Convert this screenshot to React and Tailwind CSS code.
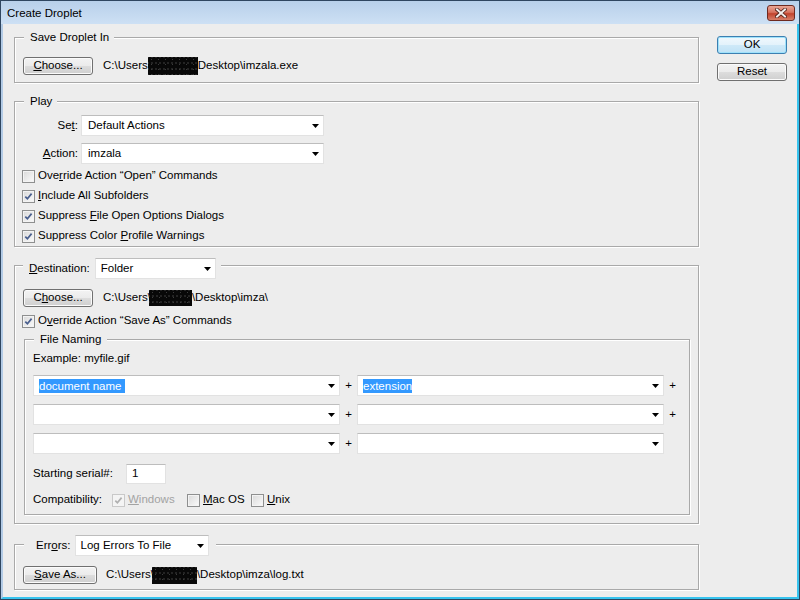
import React from 'react';
import clsx from 'clsx';

function Check({ checked, disabled }) {
    return (
        <span
            className={clsx(
                'w-[13px] h-[13px] border flex items-center justify-center shrink-0',
                disabled
                    ? 'border-[#c9c9c9] bg-[#f4f4f4]'
                    : 'border-[#8e8f8f] bg-linear-to-br from-[#d9d9d9] to-[#fbfbfb] shadow-[inset_0_0_0_1px_#f3f3f3]'
            )}
        >
            {checked && (
                <svg width="9" height="9" viewBox="0 0 9 9">
                    <path
                        d="M1.3 4.6 L3.4 6.8 L7.6 1.6"
                        fill="none"
                        stroke={disabled ? '#b0b0b0' : '#4a5f8e'}
                        strokeWidth="1.7"
                    />
                </svg>
            )}
        </span>
    );
}

function CheckRow({ checked, children }) {
    return (
        <div className="h-[20px] flex items-center gap-[3px] -ml-[1px]">
            <Check checked={checked} />
            <span>{children}</span>
        </div>
    );
}

function Arrow() {
    return (
        <svg width="7" height="4" viewBox="0 0 7 4" className="shrink-0">
            <path d="M0 0h7L3.5 4z" fill="#000" />
        </svg>
    );
}

function Select({ className, children }) {
    return (
        <div
            className={clsx(
                'h-[21px] bg-white border border-[#e2e2e2] border-t-[#bdbdbd] flex items-center justify-between pr-[4px] shrink-0',
                className
            )}
        >
            <span className="flex items-center">{children}</span>
            <Arrow />
        </div>
    );
}

function Button({ className, children }) {
    return (
        <div
            className={clsx(
                'h-[18px] border border-[#707070] rounded-[3px] flex items-center justify-center shrink-0 bg-[linear-gradient(#f3f3f3,#ebebeb_50%,#dddddd_50%,#cfcfcf)] shadow-[inset_0_0_0_1px_#fbfbfb]',
                className
            )}
        >
            {children}
        </div>
    );
}

// blacked-out user name in the paths
function Redacted({ className }) {
    return (
        <span
            className={clsx(
                'inline-block bg-[#080808] bg-[radial-gradient(#3c3c3c_0.6px,transparent_1px),radial-gradient(#2a2a2a_0.5px,transparent_1px)] bg-[length:7px_5px,4px_6px] bg-[position:0_0,2px_3px]',
                className
            )}
        />
    );
}

const groupBox = 'border border-[#a9a9a9] shadow-[inset_1px_1px_0_#fff,1px_1px_0_#fff]';

export default function App() {
    return (
        <div className="w-[800px] h-[600px] border border-[#2f4660] flex flex-col overflow-hidden bg-[#ededed] text-black text-[11.5px] leading-none font-['Liberation_Sans',Arial,sans-serif]">
            {/* title bar */}
            <div className="h-[23px] shrink-0 flex items-start bg-linear-to-b from-[#b8d0ea] to-[#cde0f4]">
                <span className="pl-[6px] mt-[7px] text-[11.5px]">Create Droplet</span>
                <div className="ml-auto mr-[4px] mt-[4px] w-[28px] h-[16px] rounded-[3px] border border-[#6e2a20] bg-[linear-gradient(#e9a595,#d7735f_45%,#c2432d_55%,#d8806a)] flex items-center justify-center">
                    <svg width="12" height="10" viewBox="0 0 12 10">
                        <path d="M2 1.5 L10 8.5 M10 1.5 L2 8.5" stroke="#4a1d15" strokeWidth="3.6" strokeLinecap="square" />
                        <path d="M2 1.5 L10 8.5 M10 1.5 L2 8.5" stroke="#f4f0ef" strokeWidth="2" strokeLinecap="square" />
                    </svg>
                </div>
            </div>

            {/* body */}
            <div className="flex-1 flex border-l-2 border-l-[#b3cbe6] border-r-2 border-r-[#36c3ee] border-b-2 border-b-[#36c3ee] pl-[11px]">
                <div className="w-[685px] flex flex-col">
                    {/* Save Droplet In */}
                    <div className={clsx(groupBox, 'mt-[13px] pl-[8px] pb-[7px]')}>
                        <div className="-mt-[8px] ml-[1px] w-fit bg-[#ededed] pl-[6px] pr-[5px] h-[14px] leading-[14px]">Save Droplet In</div>
                        <div className="mt-[13px] flex items-center">
                            <Button className="w-[70px]"><span><u>C</u>hoose...</span></Button>
                            <span className="ml-[10px] flex items-center">
                                C:\Users<Redacted className="w-[50px] h-[18px]" />Desktop\imzala.exe
                            </span>
                        </div>
                    </div>

                    {/* Play */}
                    <div className={clsx(groupBox, 'mt-[18px] pl-[8px]')}>
                        <div className="-mt-[8px] ml-[1px] w-fit bg-[#ededed] pl-[6px] pr-[5px] h-[14px] leading-[14px]">Play</div>
                        <div className="mt-[7px] flex items-center">
                            <span className="w-[55px] text-right">Se<u>t</u>:</span>
                            <Select className="ml-[3px] w-[243px] pl-[6px]">Default Actions</Select>
                        </div>
                        <div className="mt-[7px] flex items-center">
                            <span className="w-[55px] text-right"><u>A</u>ction:</span>
                            <Select className="ml-[3px] w-[243px] pl-[6px]">imzala</Select>
                        </div>
                        <div className="mt-[2px] flex flex-col">
                            <CheckRow>Ove<u>r</u>ride Action “Open” Commands</CheckRow>
                            <CheckRow checked><u>I</u>nclude All Subfolders</CheckRow>
                            <CheckRow checked>Suppress <u>F</u>ile Open Options Dialogs</CheckRow>
                            <CheckRow checked>Suppress Color <u>P</u>rofile Warnings</CheckRow>
                        </div>
                    </div>

                    {/* Destination */}
                    <div className={clsx(groupBox, 'mt-[18px] pl-[8px] pb-[8px]')}>
                        <div className="-mt-[8px] w-fit bg-[#ededed] pl-[6px] pr-[5px] h-[21px] flex items-center">
                            <span><u>D</u>estination:</span>
                            <Select className="ml-[5px] w-[121px] pl-[5px]">Folder</Select>
                        </div>
                        <div className="mt-[10px] flex items-center">
                            <Button className="w-[70px]"><span>C<u>h</u>oose...</span></Button>
                            <span className="ml-[10px] flex items-center">
                                C:\Users\<Redacted className="w-[43px] h-[16px] -ml-[2px]" />\Desktop\imza\
                            </span>
                        </div>
                        <div className="mt-[4px]">
                            <CheckRow checked>O<u>v</u>erride Action “Save As” Commands</CheckRow>
                        </div>

                        {/* File Naming */}
                        <div className={clsx(groupBox, 'mt-[8px] ml-[1px] w-[666px] pl-[8px] pb-[6px]')}>
                            <div className="-mt-[8px] ml-[1px] w-fit bg-[#ededed] pl-[6px] pr-[6px] h-[14px] leading-[14px]">File Naming</div>
                            <div className="mt-[6px] h-[14px] flex items-center">Example: myfile.gif</div>
                            <div className="mt-[9px] flex flex-col gap-[8px]">
                                {[0, 1, 2].map((i) => (
                                    <div key={i} className="flex items-center">
                                        <Select className="w-[307px] pl-[5px]">
                                            {i === 0 && (
                                                <span className="bg-[#3399ff] text-white h-[14px] leading-[14px]">document name&nbsp;</span>
                                            )}
                                        </Select>
                                        <span className="w-[17px] text-center">+</span>
                                        <Select className="w-[307px] pl-[5px]">
                                            {i === 0 && (
                                                <span className="bg-[#3399ff] text-white h-[14px] leading-[14px]">extension</span>
                                            )}
                                        </Select>
                                        <span className="w-[17px] text-center">{i < 2 ? '+' : ''}</span>
                                    </div>
                                ))}
                            </div>
                            <div className="mt-[10px] flex items-center">
                                <span className="w-[93px]">Starting serial#:</span>
                                <div className="w-[40px] h-[20px] bg-white border border-[#e2e2e2] border-t-[#bdbdbd] flex items-center pl-[5px]">1</div>
                            </div>
                            <div className="mt-[8px] h-[16px] flex items-center">
                                <span className="w-[79px]">Compatibility:</span>
                                <div className="w-[75px] flex items-center gap-[3px]">
                                    <Check checked disabled />
                                    <span className="text-[#a3a3a3]"><u>W</u>indows</span>
                                </div>
                                <div className="w-[64px] flex items-center gap-[3px]">
                                    <Check />
                                    <span><u>M</u>ac OS</span>
                                </div>
                                <div className="flex items-center gap-[3px]">
                                    <Check />
                                    <span><u>U</u>nix</span>
                                </div>
                            </div>
                        </div>
                    </div>

                    {/* Errors */}
                    <div className={clsx(groupBox, 'mt-[20px] pl-[8px] pb-[5px]')}>
                        <div className="-mt-[10px] ml-[1px] w-fit bg-[#ededed] pl-[12px] pr-[7px] h-[21px] flex items-center">
                            <span>Err<u>o</u>rs:</span>
                            <Select className="ml-[4px] w-[134px] pl-[5px]">Log Errors To File</Select>
                        </div>
                        <div className="mt-[10px] flex items-center">
                            <Button className="w-[74px]"><span><u>S</u>ave As...</span></Button>
                            <span className="ml-[9px] flex items-center">
                                C:\Users\<Redacted className="w-[45px] h-[17px] -ml-[2px]" />\Desktop\imza\log.txt
                            </span>
                        </div>
                    </div>
                </div>

                {/* buttons */}
                <div className="ml-[18px] w-[70px] pt-[12px] flex flex-col gap-[9px]">
                    <div className="h-[18px] border border-[#3c7fb1] rounded-[3px] flex items-center justify-center bg-[linear-gradient(#f0f8fd,#e3f2fb_50%,#cfe9f8_50%,#bfe2f6)] shadow-[inset_0_0_0_1px_#9fe2fb]">OK</div>
                    <Button className="w-[70px]">Reset</Button>
                </div>
            </div>
        </div>
    );
}
